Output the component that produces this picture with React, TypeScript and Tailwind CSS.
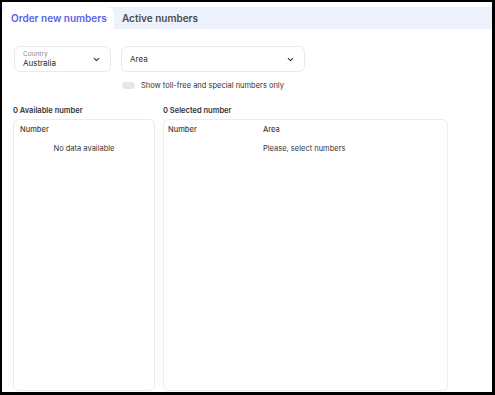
import { ChevronDown } from "lucide-react";

const Select = ({ label, value, className }: { label?: string; value: string; className: string }) => (
  <div className={`flex h-[26px] items-center justify-between rounded-md border border-[#e8e9ec] pl-2 pr-[9px] ${className}`}>
    {label ? (
      <div className="flex flex-col leading-none">
        <span className="text-[6.5px] text-[#8a8a8a]">{label}</span>
        <span className="mt-[2px] text-[8px] text-[#222]">{value}</span>
      </div>
    ) : (
      <span className="text-[8px] text-[#333]">{value}</span>
    )}
    <ChevronDown size={9} strokeWidth={3} className="text-[#333]" />
  </div>
);

const App = () => {
  return (
    <div className="h-[395px] w-[495px] overflow-hidden border-t-2 border-r-[3px] border-b-[3px] border-l-2 border-black bg-white font-['Inter',sans-serif]">
      <div className="flex h-full flex-col">
        {/* Tabs */}
        <div className="mt-[5px] flex h-[22px] bg-[#eef2fd]">
          <div className="flex w-[112px] items-center whitespace-nowrap rounded-t-lg bg-white pl-[9px] text-[10px] font-semibold text-[#5a62e6]">
            Order new numbers
          </div>
          <div className="flex items-center whitespace-nowrap pl-[8px] text-[10px] font-semibold text-[#4a4a4a]">Active numbers</div>
        </div>

        {/* Filters */}
        <div className="mt-[17px] flex gap-[10px] pl-[12px]">
          <Select label="Country" value="Australia" className="w-[97px]" />
          <div className="flex flex-col">
            <Select value="Area" className="w-[184px]" />
            <div className="mt-[8px] flex items-center gap-[6px] pl-[1px]">
              <div className="h-[7px] w-[13px] rounded-full bg-[#e6e6e8]" />
              <span className="text-[7.5px] text-[#333]">Show toll-free and special numbers only</span>
            </div>
          </div>
        </div>

        {/* Lists */}
        <div className="mt-[13px] flex min-h-0 flex-1 gap-[8px] pb-[1px] pl-[11px]">
          <div className="flex w-[142px] flex-col">
            <div className="mt-[2px] text-[7.5px] font-semibold leading-[10px] text-[#333]">0 Available number</div>
            <div className="mt-[3px] flex-1 rounded-md border border-[#ececee] px-[6px] pt-[4px]">
              <div className="text-[7.5px] font-medium text-[#444]">Number</div>
              <div className="mt-[7px] text-center text-[7.5px] text-[#333]">No data available</div>
            </div>
          </div>
          <div className="flex w-[285px] flex-col">
            <div className="mt-[2px] text-[7.5px] font-semibold leading-[10px] text-[#333]">0 Selected number</div>
            <div className="mt-[3px] flex-1 rounded-md border border-[#ececee] px-[4px] pt-[4px]">
              <div className="flex text-[7.5px] font-medium text-[#444]">
                <span className="w-[95px]">Number</span>
                <span>Area</span>
              </div>
              <div className="mt-[7px] pl-[95px] text-[7.5px] text-[#333]">Please, select numbers</div>
            </div>
          </div>
        </div>
      </div>
    </div>
  );
};

export default App;
